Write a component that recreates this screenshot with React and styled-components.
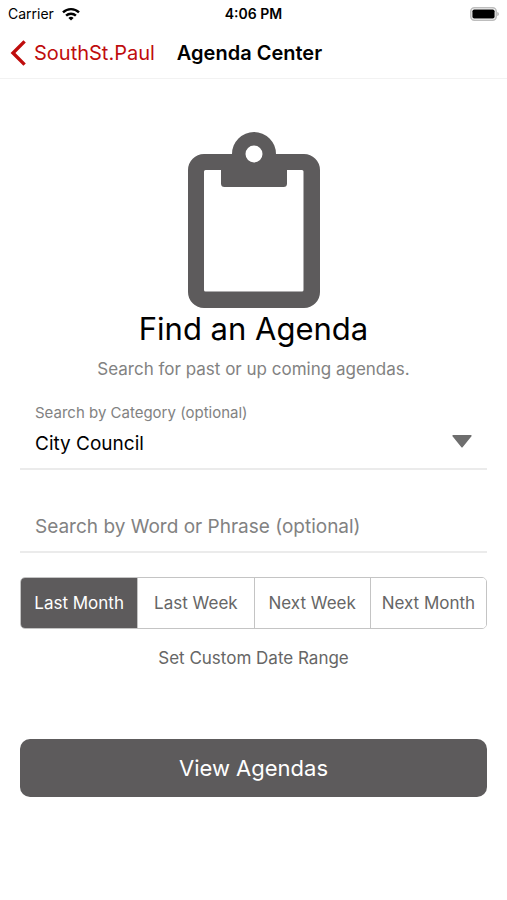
import {useState} from "react"
import styled, {createGlobalStyle} from "styled-components"

const vars = {
	font: `Inter, "Liberation Sans", sans-serif`,
	grayDark: "#5d5b5c",
	grayTxt: "#666",
	grayLight: "#828282",
	line: "#ebebeb",
	border: "#c4c4c4",
	red: "#bf0d0d",
}

const GlobalStyle = createGlobalStyle`
	*, *::before, *::after {
		box-sizing: border-box;
	}
	body {
		margin: 0;
		background: #fff;
		color: #000;
		font-family: ${vars.font};
	}
	button, input, select {
		font-family: inherit;
		margin: 0;
	}
`

// top bars
const StatusBar = styled.div`
	display: grid;
	grid-template-columns: 1fr auto 1fr;
	align-items: center;
	height: 27px;
	padding: 0 8px;
	font-size: 14px;
	line-height: 20px;
`

const Carrier = styled.span`
	display: flex;
	align-items: center;
	gap: 8px;
`

const Time = styled.time`
	font-weight: 600;
`

const BatteryIcon = styled.svg`
	justify-self: end;
`

const NavBar = styled.header`
	display: flex;
	align-items: center;
	gap: 22px;
	height: 52px;
	padding: 0 10px;
	border-bottom: 1px solid #f2f2f2;
`

const BackLink = styled.a`
	display: flex;
	align-items: center;
	gap: 8px;
	color: ${vars.red};
	font-size: 20px;
	line-height: 28px;
	text-decoration: none;
`

const NavTitle = styled.h1`
	margin: 0;
	font-size: 20px;
	line-height: 28px;
	font-weight: 600;
`

// content
const Main = styled.main`
	display: flex;
	flex-direction: column;
	padding: 53px 20px 100px;
`

const Intro = styled.section`
	display: flex;
	flex-direction: column;
	align-items: center;
	text-align: center;
`

const Title = styled.h2`
	margin: 0;
	font-size: 31px;
	line-height: 42px;
	font-weight: 400;
`

const Subtitle = styled.p`
	margin: 9px 0 0;
	color: ${vars.grayLight};
	font-size: 17px;
	line-height: 20px;
`

const Form = styled.form`
	display: flex;
	flex-direction: column;
	margin-top: 24px;
`

const Field = styled.div`
	display: flex;
	flex-direction: column;
	border-bottom: 2px solid ${vars.line};
`

const Label = styled.label`
	padding: 0 15px;
	color: ${vars.grayLight};
	font-size: 15px;
	line-height: 20px;
`

const SelectWrap = styled.div`
	display: grid;
	align-items: center;

	> * {
		grid-area: 1 / 1;
	}
	svg {
		justify-self: end;
		margin: 0 15px 8px 0;
		pointer-events: none;
	}
`

const Select = styled.select`
	appearance: none;
	width: 100%;
	height: 45px;
	padding: 0 48px 4px 15px;
	border: 0;
	background: none;
	color: #000;
	font-size: 19px;
`

const Input = styled.input`
	width: 100%;
	height: 52px;
	margin-top: 29px;
	padding: 2px 15px 0;
	border: 0;
	background: none;
	color: #000;
	font-size: 19px;

	&::placeholder {
		color: ${vars.grayLight};
		opacity: 1;
	}
`

const Segments = styled.div`
	display: grid;
	grid-template-columns: repeat(4, 1fr);
	height: 52px;
	margin-top: 24px;
	border: 1px solid ${vars.border};
	border-radius: 5px;
	overflow: hidden;
`

const Segment = styled.button`
	padding: 0;
	border: 0;
	border-left: ${p => p.$first ? "0" : `1px solid ${vars.border}`};
	background: ${p => p.$active ? vars.grayDark : "#fff"};
	color: ${p => p.$active ? "#fff" : vars.grayTxt};
	font-size: 17px;
	white-space: nowrap;
`

const TextButton = styled.button`
	align-self: center;
	margin-top: 17px;
	padding: 0;
	border: 0;
	background: none;
	color: ${vars.grayTxt};
	font-size: 17px;
	line-height: 24px;
`

const SubmitButton = styled.button`
	height: 58px;
	margin-top: 69px;
	border: 0;
	border-radius: 10px;
	background: ${vars.grayDark};
	color: #fff;
	font-size: 22px;
`

const Wifi = () => (
	<svg width="18" height="14" viewBox="0 0 18 14" fill="none" stroke="#000" strokeWidth="2.4" aria-hidden="true">
		<path d="M1 5.4a11.4 11.4 0 0 1 16 0" />
		<path d="M4.1 8.7a7 7 0 0 1 9.8 0" />
		<path d="M9 13.6 6.4 11a3.7 3.7 0 0 1 5.2 0Z" fill="#000" stroke="none" />
	</svg>
)

const Battery = () => (
	<BatteryIcon width="30" height="14" viewBox="0 0 30 14" aria-hidden="true">
		<rect x="1.8" y="0.8" width="25.4" height="12.4" rx="3.6" fill="#fff" stroke="#bdbdbd" strokeWidth="1.6" />
		<rect x="3.4" y="2.4" width="22.2" height="9.2" rx="1.8" fill="#000" />
		<path d="M28.4 4.9c1.8.5 1.8 3.7 0 4.2Z" fill="#a8a8a8" />
	</BatteryIcon>
)

const Chevron = () => (
	<svg width="16" height="26" viewBox="0 0 16 26" fill="none" stroke={vars.red} strokeWidth="3.4" aria-hidden="true">
		<path d="M14.6 1.4 3 13l11.600 11.600" />
	</svg>
)

const Clipboard = () => (
	<svg width="132" height="176" viewBox="0 0 132 176" fill={vars.grayDark} aria-hidden="true">
		<path
			fillRule="evenodd"
			d="M16 22H44a22 22 0 0 1 44 0H116a16 16 0 0 1 16 16V160a16 16 0 0 1-16 16H16a16 16 0 0 1-16-16V38a16 16 0 0 1 16-16ZM17.500 38a1.500 1.500 0 0 0-1.500 1.500V158a1.500 1.500 0 0 0 1.500 1.500H114a1.500 1.500 0 0 0 1.500-1.500V39.500a1.500 1.500 0 0 0-1.500-1.500H99V51.500a3.500 3.500 0 0 1-3.500 3.500H36.500a3.500 3.500 0 0 1-3.500-3.500V38ZM57.500 22a8.500 8.500 0 1 0 17 0a8.500 8.500 0 1 0-17 0Z"
		/>
	</svg>
)

const Arrow = () => (
	<svg width="20" height="13" viewBox="0 0 20 13" fill="#6e6e6e" aria-hidden="true">
		<path d="M1.200 0H18.800Q20.200.4 19.300 1.600L10.600 12.200Q10 13 9.400 12.200L.7 1.600Q-.2.4 1.200 0Z" />
	</svg>
)

const ranges = ["Last Month", "Last Week", "Next Week", "Next Month"]

export default function App(){
	const [range, setRange] = useState(ranges[0])

	return (
		<>
			<GlobalStyle />
			<StatusBar>
				<Carrier>Carrier <Wifi /></Carrier>
				<Time>4:06 PM</Time>
				<Battery />
			</StatusBar>
			<NavBar>
				<BackLink href="#"><Chevron />SouthSt.Paul</BackLink>
				<NavTitle>Agenda Center</NavTitle>
			</NavBar>

			<Main>
				<Intro>
					<Clipboard />
					<Title>Find an Agenda</Title>
					<Subtitle>Search for past or up coming agendas.</Subtitle>
				</Intro>

				<Form onSubmit={e => e.preventDefault()}>
					<Field>
						<Label htmlFor="category">Search by Category (optional)</Label>
						<SelectWrap>
							<Select id="category" defaultValue="City Council">
								<option>City Council</option>
							</Select>
							<Arrow />
						</SelectWrap>
					</Field>
					<Field>
						<Input
							type="text"
							aria-label="Search by Word or Phrase (optional)"
							placeholder="Search by Word or Phrase (optional)"
						/>
					</Field>

					<Segments>
						{ranges.map((name, i) => (
							<Segment
								key={name}
								type="button"
								$first={i === 0}
								$active={name === range}
								aria-pressed={name === range}
								onClick={() => setRange(name)}
							>
								{name}
							</Segment>
						))}
					</Segments>
					<TextButton type="button">Set Custom Date Range</TextButton>
					<SubmitButton type="submit">View Agendas</SubmitButton>
				</Form>
			</Main>
		</>
	)
}
